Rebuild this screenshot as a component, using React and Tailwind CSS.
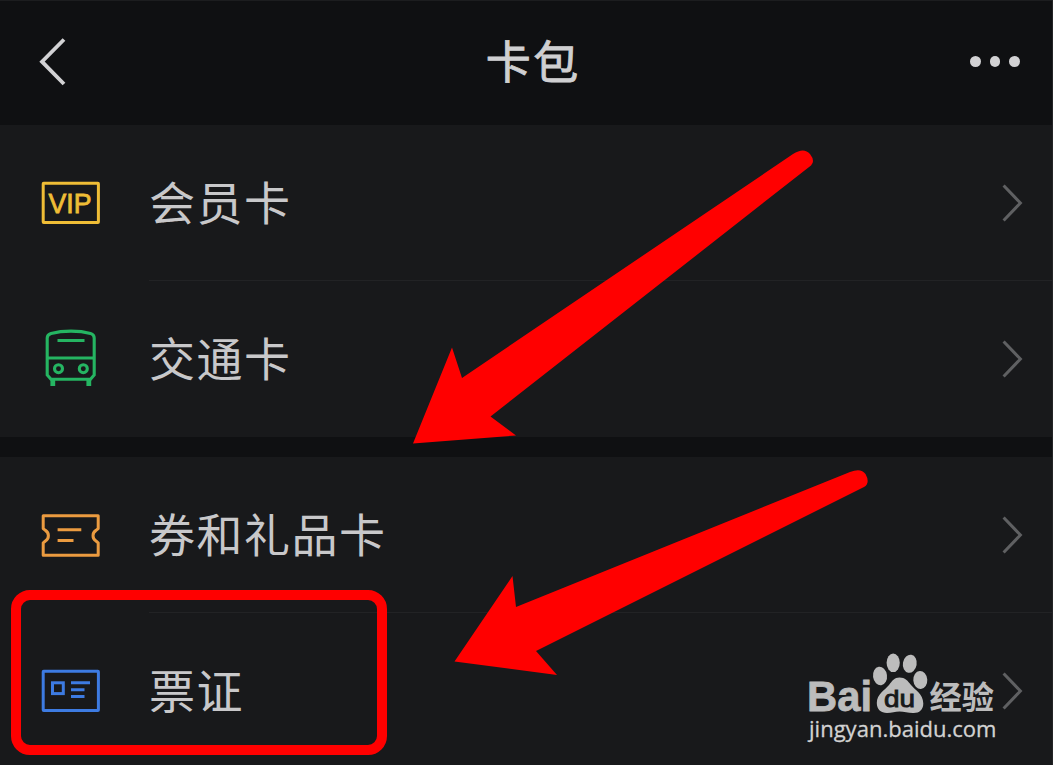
const FONT = 'font-["Noto_Sans_CJK_SC","Noto_Sans",sans-serif]';

function VipIcon() {
    return (
        <svg width="62" height="62" viewBox="0 0 62 62" fill="none" stroke="#efbd36">
            <rect x="3.2" y="11.2" width="55.2" height="39.2" rx="0.5" strokeWidth="3" />
            <text x="8.5" y="41.2" textLength="43" lengthAdjust="spacingAndGlyphs" fontSize="27" fontFamily="Liberation Sans, sans-serif" fill="#efbd36" strokeWidth="0.8">VIP</text>
        </svg>
    );
}

function BusIcon() {
    return (
        <svg width="62" height="62" viewBox="0 0 62 62" fill="none" stroke="#25b562" strokeWidth="3.1">
            <path d="M7.2 47V10Q7.2 6.6 11 5.4Q20 3.1 31 3.1Q42 3.1 50.5 5.4Q54.2 6.6 54.2 10V47L50.5 51.3H11L7.2 47Z" />
            <path d="M7.4 30H54.2M17.5 12.5H44.5" />
            <circle cx="18.5" cy="40.7" r="4" />
            <circle cx="43.3" cy="40.7" r="4" />
            <path d="M12.8 51V58M48.8 51V58" strokeWidth="4.8" />
        </svg>
    );
}

function CouponIcon() {
    return (
        <svg width="62" height="62" viewBox="0 0 62 62" fill="none" stroke="#eb9b40" strokeWidth="3" strokeLinejoin="round">
            <path d="M3.2 11.8H58.2V24.6L56 26.4A6.2 6.2 0 0 0 56 37L58.2 38.8V51.2H3.2V38.8L5.4 37A6.2 6.2 0 0 0 5.4 26.4L3.2 24.6Z" />
            <path d="M17.6 25.8H41.3M17.6 36.6H33.5" />
        </svg>
    );
}

function TicketIcon() {
    return (
        <svg width="62" height="62" viewBox="0 0 62 62" fill="none" stroke="#3d7be2" strokeWidth="3">
            <rect x="3.2" y="11.2" width="55.2" height="39.2" rx="0.5" />
            <rect x="12.5" y="22.8" width="10.8" height="10.8" />
            <path d="M31 22.8H50M31 29.8H44.5M31 36.5H44.5" />
        </svg>
    );
}

function Chevron() {
    return (
        <svg className="ml-auto" width="22" height="40" viewBox="0 0 22 40" fill="none" stroke="#5f6062" strokeWidth="3">
            <path d="M2.6 2.5L19.4 20L2.6 37.5" />
        </svg>
    );
}

const groups = [
    [
        { label: '会员卡', Icon: VipIcon },
        { label: '交通卡', Icon: BusIcon },
    ],
    [
        { label: '券和礼品卡', Icon: CouponIcon },
        { label: '票证', Icon: TicketIcon },
    ],
];

function Row({ label, Icon, divider }) {
    return (
        <div className="flex h-[156px] shrink-0 pl-10">
            <div className="flex w-[109px] shrink-0 items-center">
                <Icon />
            </div>
            <div className={`flex flex-1 items-center border-b pr-[29px] ${divider ? 'border-[#222325]' : 'border-transparent'}`}>
                <span className="pb-[6px] text-[46px] leading-none tracking-[1.5px] text-[#c8c8ca]">{label}</span>
                <Chevron />
            </div>
        </div>
    );
}

function Watermark() {
    return (
        <svg className="absolute left-[800px] top-[645px]" width="210" height="105" viewBox="800 645 210 105" fill="#bcbcbc">
            <text x="807" y="711" textLength="65" lengthAdjust="spacingAndGlyphs" fontSize="43" fontWeight="700" fontFamily="Liberation Sans, sans-serif" stroke="#bcbcbc" strokeWidth="0.8">Bai</text>
            <ellipse cx="880" cy="676" rx="7" ry="9.3" transform="rotate(-8 880 676)" />
            <ellipse cx="893.2" cy="662.8" rx="6.6" ry="9.3" />
            <ellipse cx="909.8" cy="663.8" rx="6.9" ry="9.1" transform="rotate(10 909.8 663.8)" />
            <ellipse cx="920.3" cy="680" rx="7" ry="9" transform="rotate(-4 920.3 680)" />
            <path d="M899.5 677.5C905 677.5 908 681 911 685C915 690 923.3 694 923.3 703.5C923.3 710 919 713.3 913 713C908 712.8 904 711.5 899.5 711.5C895 711.5 892 713 887 713C881 713 876.8 709.5 876.8 703C876.8 694 885 690 889 685C892 681 894.5 677.5 899.5 677.5Z" />
            <text x="884" y="707" textLength="31" lengthAdjust="spacingAndGlyphs" fontSize="24" fontFamily="Liberation Sans, sans-serif" fill="#18191b" stroke="#18191b" strokeWidth="0.9">du</text>
            <text x="929.5" y="708.5" textLength="64.5" lengthAdjust="spacingAndGlyphs" fontSize="32" fontWeight="700" fontFamily="Noto Sans CJK SC, sans-serif">经验</text>
            <text x="809" y="736.5" textLength="187.5" lengthAdjust="spacingAndGlyphs" fontSize="22.5" fontFamily="Open Sans, Noto Sans, sans-serif" fill="#d2d2d2" stroke="#d2d2d2" strokeWidth="0.3">jingyan.baidu.com</text>
        </svg>
    );
}

export default function App() {
    return (
        <div className={`relative flex h-[765px] w-[1053px] flex-col overflow-hidden border-r border-[#232426] bg-[#0f1012] ${FONT}`}>
            <header className="flex h-[125px] shrink-0 items-center justify-between border-t border-[#1c1d1f] pb-[3px] pl-[38px] pr-[32px]">
                <svg width="50" height="50" viewBox="0 0 50 50" fill="none" stroke="#d2d2d4" strokeWidth="3.8">
                    <path d="M26 2.5L4 24.7L26 47" />
                </svg>
                <h1 className="ml-[8px] pb-[4px] text-[45px] leading-none tracking-[2.6px] text-[#cfcfd1] [-webkit-text-stroke:0.9px_#cfcfd1]">卡包</h1>
                <div className="flex gap-[9px]">
                    <span className="size-[10.5px] rounded-full bg-[#d2d2d4]" />
                    <span className="size-[10.5px] rounded-full bg-[#d2d2d4]" />
                    <span className="size-[10.5px] rounded-full bg-[#d2d2d4]" />
                </div>
            </header>

            <main className="flex flex-col gap-5">
                {groups.map((rows, i) => (
                    <section key={i} className="bg-[#18191b]">
                        {rows.map((row, j) => (
                            <Row key={row.label} {...row} divider={j === 0} />
                        ))}
                    </section>
                ))}
            </main>

            <Watermark />

            {/* Hand-drawn marks over the list */}
            <div className="absolute left-[11px] top-[590px] h-[165px] w-[376px] rounded-[19px] border-[10px] border-[#ff0000]" />
            <svg className="absolute inset-0" width="1053" height="765" viewBox="0 0 1053 765" fill="#ff0000">
                <path d="M413 443.5L452 347.5L462 378L793 154Q804 147 810 154Q815.5 161 811 165.5L490.5 416.5L516 435.5Z" />
                <path d="M454.5 661.5L512.5 576L516 607L850 472Q861 467.5 865.5 474Q870.5 483 864 487L536 651L557 675Z" />
            </svg>
        </div>
    );
}
